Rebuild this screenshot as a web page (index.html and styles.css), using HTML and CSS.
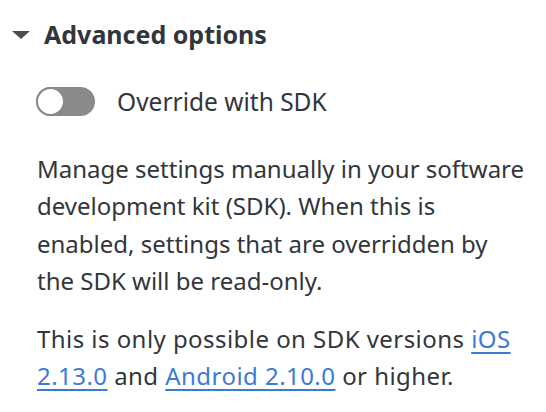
FILE: index.html
```html
<!DOCTYPE html>
<html>
<head>
<meta charset="utf-8">
<link rel="stylesheet" href="styles.css">
</head>
<body>
<div class="panel">
  <div class="header">
    <svg class="caret" width="18" height="8" viewBox="0 0 18 8"><path d="M0 0 H18 L9 8 Z" fill="#4a4d51"/></svg>
    <span class="title">Advanced options</span>
  </div>
  <div class="toggle-row">
    <span class="switch"><span class="knob"></span></span>
    <span class="toggle-label">Override with SDK</span>
  </div>
  <p class="text">Manage settings manually in your software development kit (SDK). When this is enabled, settings that are overridden by the SDK will be read-only.</p>
  <p class="text wide">This is only possible on SDK versions <a href="#">iOS 2.13.0</a> and <a href="#">Android 2.10.0</a> or higher.</p>
</div>
</body>
</html>
```
FILE: styles.css
```css
html, body {
  margin: 0;
  padding: 0;
  background: #ffffff;
}
body {
  font-family: "Noto Sans", "Open Sans", sans-serif;
  color: #32363a;
}
.panel {
  padding: 16px 0 0 12px;
}
.header {
  display: flex;
  align-items: center;
  gap: 14px;
  height: 36px;
}
.caret {
  display: block;
  margin-top: 2px;
}
.title {
  font-size: 25px;
  font-weight: 700;
  color: #32363a;
}
.toggle-row {
  display: flex;
  align-items: center;
  gap: 22px;
  margin: 34px 0 0 24px;
  height: 30px;
}
.switch {
  position: relative;
  width: 59px;
  height: 29px;
  border-radius: 15px;
  background: #8a8a8a;
  box-sizing: border-box;
}
.knob {
  position: absolute;
  left: 0;
  top: 0;
  width: 29px;
  height: 29px;
  border-radius: 50%;
  background: #fff;
  border: 2px solid #8a8a8a;
  box-sizing: border-box;
}
.toggle-label {
  font-size: 24.5px;
}
.text {
  font-size: 24px;
  line-height: 37.3px;
  margin: 34px 0 0 25px;
  max-width: 492px;
}
.text + .text {
  margin-top: 21px;
}
.wide {
  letter-spacing: 0.45px;
}
.text a {
  color: #3a7bd5;
  text-decoration: underline;
  text-underline-offset: 4px;
}
```
